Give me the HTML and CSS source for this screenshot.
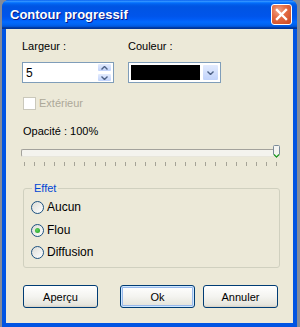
FILE: index.html
```html
<!DOCTYPE html>
<html lang="fr">
<head>
    <meta charset="UTF-8">
    <title>Contour progressif</title>
    <link rel="stylesheet" href="styles.css">
</head>
<body>
    <div class="window">
        <!-- barre de titre -->
        <div class="titlebar">
            <span class="title">Contour progressif</span>
            <span class="close">
                <svg width="13" height="13" viewBox="0 0 13 13">
                    <path d="M2 2 L11 11 M11 2 L2 11" stroke="#fff" stroke-width="2.4" stroke-linecap="square"/>
                </svg>
            </span>
        </div>

        <div class="client">
            <!-- largeur / couleur -->
            <div class="fields">
                <div class="field">
                    <label class="lbl">Largeur :</label>
                    <div class="spin">
                        <span class="spin-value">5</span>
                        <div class="spin-btns">
                            <span class="spin-btn">
                                <svg width="7" height="4" viewBox="0 0 7 4"><path d="M0.5 3.5 L3.5 0.5 L6.5 3.5" fill="none" stroke="#4d6185" stroke-width="1.4"/></svg>
                            </span>
                            <span class="spin-btn">
                                <svg width="7" height="4" viewBox="0 0 7 4"><path d="M0.5 0.5 L3.5 3.5 L6.5 0.5" fill="none" stroke="#4d6185" stroke-width="1.4"/></svg>
                            </span>
                        </div>
                    </div>
                </div>
                <div class="field">
                    <label class="lbl">Couleur :</label>
                    <div class="combo">
                        <span class="swatch"></span>
                        <span class="combo-btn">
                            <svg width="7" height="4" viewBox="0 0 7 4"><path d="M0.5 0.5 L3.5 3.5 L6.5 0.5" fill="none" stroke="#4d6185" stroke-width="1.4"/></svg>
                        </span>
                    </div>
                </div>
            </div>

            <!-- case à cocher désactivée -->
            <div class="check disabled"><span class="box"></span>Extérieur</div>

            <!-- opacité -->
            <div class="opacity-label">Opacité : 100%</div>
            <div class="slider">
                <div class="track"></div>
                <svg class="thumb" width="7" height="13" viewBox="0 0 7 13">
                    <path d="M0.5 1.5 Q0.5 0.5 1.5 0.5 L5.5 0.5 Q6.5 0.5 6.5 1.5 L6.5 9.5 L3.5 12.5 L0.5 9.5 Z" fill="#f4f4f0" stroke="#7a8a99"/>
                    <path d="M1 9.5 L3.5 12 L6 9.5" fill="none" stroke="#21a121" stroke-width="1.2"/>
                </svg>
            </div>
            <div class="ticks">
                <span></span><span></span><span></span><span></span><span></span><span></span><span></span>
                <span></span><span></span><span></span><span></span><span></span><span></span><span></span>
                <span></span><span></span><span></span><span></span><span></span><span></span><span></span>
                <span></span><span></span><span></span><span></span><span></span>
            </div>

            <!-- effet -->
            <fieldset class="group">
                <legend>Effet</legend>
                <div class="radio"><span class="circle"></span>Aucun</div>
                <div class="radio"><span class="circle checked"></span>Flou</div>
                <div class="radio"><span class="circle"></span>Diffusion</div>
            </fieldset>

            <!-- boutons -->
            <div class="buttons">
                <button class="btn btn-preview">Aperçu</button>
                <button class="btn btn-ok">Ok</button>
                <button class="btn">Annuler</button>
            </div>
        </div>
    </div>
</body>
</html>
```

FILE: styles.css
```css
/* page */
body {
    margin: 0;
    background-color: #848b99;
    font-family: "Liberation Sans", Arial, sans-serif;
    font-size: 11px;
    color: #000;
}

.window {
    width: 295px;
    height: 327px;
    margin-left: 2px;
    display: flex;
    flex-direction: column;
    border-radius: 7px 7px 0 0;
    overflow: hidden;
    background-color: #0054e3;
}

/* barre de titre */
.titlebar {
    height: 29px;
    flex-shrink: 0;
    display: flex;
    align-items: center;
    justify-content: space-between;
    padding: 0 5px 0 8px;
    box-sizing: border-box;
    background: linear-gradient(to bottom, #0058ee 0%, #3593ff 4%, #288eff 6%, #127dff 8%, #036ffc 10%, #0262ee 14%, #0057e5 20%, #0054e3 24%, #0055eb 56%, #005bf5 66%, #026afe 76%, #0062ef 86%, #0052d6 92%, #0040ab 94%, #003092 100%);
}

.title {
    color: #fff;
    font-weight: bold;
    font-size: 13px;
    text-shadow: 1px 1px #0a1883;
    margin-top: -1px;
}

.close {
    width: 21px;
    height: 21px;
    box-sizing: border-box;
    border: 1px solid #fff;
    border-radius: 3px;
    display: flex;
    align-items: center;
    justify-content: center;
    background: radial-gradient(circle at 35% 30%, #f0a58a 0%, #e46c44 40%, #c9451f 100%);
    margin-top: -1px;
}

/* zone client */
.client {
    flex: 1;
    margin: 0 4px 4px 4px;
    background-color: #ece9d8;
    padding: 11px 13px 0 16px;
    display: flex;
    flex-direction: column;
    border-left: 0;
}

.lbl {
    display: block;
    line-height: 13px;
    margin-bottom: 9px;
}

.fields {
    display: flex;
    gap: 14px;
}

.spin, .combo {
    height: 21px;
    box-sizing: border-box;
    border: 1px solid #7f9db9;
    background-color: #fff;
    display: flex;
    align-items: center;
}

.spin {
    width: 92px;
    justify-content: space-between;
    padding: 0 1px 0 3px;
}

.spin-value {
    font-size: 12px;
}

.spin-btns {
    display: flex;
    flex-direction: column;
    gap: 1px;
}

.spin-btn, .combo-btn {
    display: flex;
    align-items: center;
    justify-content: center;
    box-sizing: border-box;
    border: 1px solid #fff;
    border-radius: 2px;
    background: linear-gradient(to bottom, #e3ebfd, #c1d3fb);
}

.spin-btn {
    width: 15px;
    height: 9px;
}

.combo {
    width: 93px;
    padding: 0 1px 0 2px;
    gap: 2px;
}

.swatch {
    width: 71px;
    height: 15px;
    background-color: #000;
}

.combo-btn {
    width: 17px;
    height: 17px;
}

/* case à cocher */
.check {
    display: flex;
    align-items: center;
    gap: 3px;
    margin-top: 14px;
    margin-left: 1px;
    line-height: 13px;
}

.check .box {
    width: 13px;
    height: 13px;
    box-sizing: border-box;
    border: 1px solid #cac8bb;
    background-color: #fff;
}

.disabled {
    color: #aca899;
}

/* curseur d'opacité */
.opacity-label {
    margin-top: 15px;
    line-height: 13px;
    margin-left: 1px;
}

.slider {
    position: relative;
    height: 13px;
    margin-top: 7px;
    margin-left: -1px;
}

.track {
    margin-top: 4px;
    height: 8px;
    box-sizing: border-box;
    border: 1px solid #a3a29c;
    border-right-color: #dcdad0;
    border-bottom-color: #e8e6dc;
    border-radius: 2px;
    background-color: #f4f3ee;
}

.thumb {
    position: absolute;
    top: 0;
    right: 0;
}

.ticks {
    display: flex;
    justify-content: space-between;
    margin-top: 4px;
    padding: 0 3px 0 2px;
    height: 4px;
}

.ticks span {
    width: 1px;
    height: 4px;
    background-color: #a5a397;
}

/* groupe effet */
.group {
    margin: 16px 0 0 1px;
    padding: 6px 7px 8px 7px;
    border: 1px solid #d0d0bf;
    border-radius: 3px;
    display: flex;
    flex-direction: column;
    gap: 9.5px;
    min-width: 0;
}

.group legend {
    color: #0046d5;
    padding: 0 2px;
    margin-left: 1px;
    line-height: 13px;
}

.radio {
    display: flex;
    align-items: center;
    gap: 3px;
    line-height: 13px;
    font-size: 12px;
}

.circle {
    width: 13px;
    height: 13px;
    box-sizing: border-box;
    border: 1px solid #1c5180;
    border-radius: 50%;
    background: linear-gradient(135deg, #dcdcd6, #fff);
    display: flex;
    align-items: center;
    justify-content: center;
}

.circle.checked::after {
    content: "";
    width: 5px;
    height: 5px;
    border-radius: 50%;
    background: radial-gradient(circle at 40% 40%, #5ed35e, #1f9a1f);
}

/* boutons */
.buttons {
    display: flex;
    gap: 8px;
    margin: 17px 0 0 1px;
}

.btn {
    width: 75px;
    height: 23px;
    box-sizing: border-box;
    border: 1px solid #003c74;
    border-radius: 3px;
    background: linear-gradient(to bottom, #fff 0%, #f4f4f0 50%, #e6e5dd 90%, #d6d0c5 100%);
    font-family: "Liberation Sans", Arial, sans-serif;
    font-size: 11px;
    color: #000;
    padding: 0;
}

.btn-preview {
    margin-right: 14px;
}

.btn-ok {
    box-shadow: inset 0 0 0 1px #cee7ff, inset 0 0 0 2px #98b8ea;
}
```
